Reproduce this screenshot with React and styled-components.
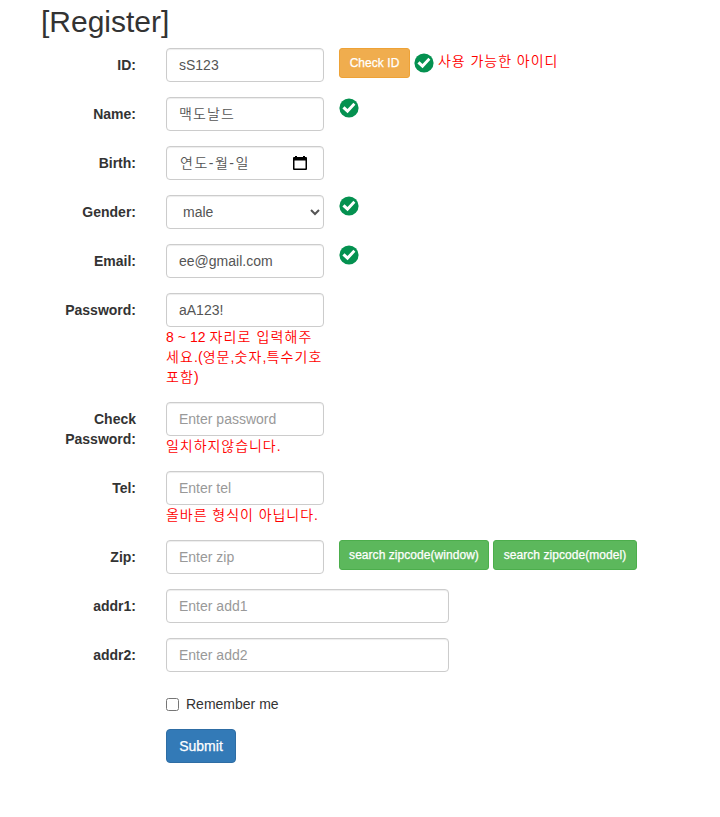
import React from "react";
import styled, { createGlobalStyle, css } from "styled-components";

const GlobalStyle = createGlobalStyle`
  *, *::before, *::after { box-sizing: border-box; }
  body {
    margin: 0;
    background: #fff;
    color: #333;
    font: 14px/20px "Liberation Sans", "Noto Sans CJK KR", sans-serif;
  }
`;

const Page = styled.main`
  width: 720px;
  height: 817px;
  padding: 5px 0 0 41px;
  overflow: hidden;
`;

const Title = styled.h2`
  margin: 0 0 10px;
  font-size: 30px;
  font-weight: 400;
  line-height: 33px;
`;

const Form = styled.form`
  display: flex;
  flex-direction: column;
  gap: 15px;
`;

const FormRow = styled.div`
  display: grid;
  grid-template-columns: 95px ${(p) => (p.$wide ? 298 : 173)}px auto;
  column-gap: 15px;
  justify-content: start;
  align-items: start;
`;

const Label = styled.label`
  padding-top: 7px;
  font-weight: 700;
  text-align: right;
`;

const Field = styled.div`
  display: flex;
  flex-direction: column;
  margin-left: 15px;
`;

const control = css`
  display: block;
  width: 100%;
  height: 34px;
  margin: 0;
  padding: 6px 12px;
  border: 1px solid #ccc;
  border-radius: 4px;
  background: #fff;
  box-shadow: inset 0 1px 1px rgba(0, 0, 0, 0.075);
  color: #555;
  font: inherit;
  font-weight: ${(p) => (p.$korean ? 350 : 400)};
  letter-spacing: ${(p) => (p.$korean ? "1.1px" : "normal")};
`;

const TextInput = styled.input`
  ${control}
  ${(p) => p.$korean && "padding-bottom: 8px;"}
  &::placeholder { color: #999; opacity: 1; }
`;

const Select = styled.select`
  ${control}
`;

const DateBox = styled.div`
  ${control}
  display: flex;
  align-items: center;
  justify-content: space-between;
  padding: 6px 16px 6px 13px;
  letter-spacing: 1.5px;
`;

const Message = styled.span`
  margin: ${(p) => p.$top || 0}px -10px 0 0;
  color: red;
  font-weight: 350;
  letter-spacing: ${(p) => p.$spacing || 0.95}px;
`;

const MessageLine = styled.span`
  display: block;
  letter-spacing: 1.1px;
`;

const Digits = styled.span`
  letter-spacing: 0.05px;
`;

const Aside = styled.div`
  display: flex;
  align-items: flex-start;
  gap: 4px;
`;

const StatusIcon = styled.svg`
  flex: none;
  width: 20px;
  height: 20px;
  margin-top: ${(p) => p.$top || 0}px;
`;

const tones = {
  warning: ["#f0ad4e", "#eea236"],
  success: ["#5cb85c", "#4cae4c"],
  primary: ["#337ab7", "#2e6da4"],
};

const Button = styled.button`
  width: ${(p) => p.$width}px;
  height: ${(p) => (p.$large ? 34 : 30)}px;
  padding: 0;
  border: 1px solid ${(p) => tones[p.$tone][1]};
  border-radius: ${(p) => (p.$large ? 4 : 3)}px;
  background: ${(p) => tones[p.$tone][0]};
  color: #fff;
  font-family: inherit;
  font-size: ${(p) => (p.$large ? 14 : 12)}px;
  font-weight: 400;
  line-height: 18px;
  letter-spacing: ${(p) => (p.$large ? 0 : 0.05)}px;
  white-space: nowrap;
  -webkit-text-stroke: 0.25px #fff;
`;

const Actions = styled.div`
  display: flex;
  flex-direction: column;
  align-items: flex-start;
  gap: 15px;
  margin: 7px 0 0 125px;
`;

const Remember = styled.label`
  display: flex;
  align-items: center;
  gap: 7px;
`;

const Checkbox = styled.input`
  width: 13px;
  height: 13px;
  margin: 1px 0 0;
`;

function Check({ top }) {
  return (
    <StatusIcon $top={top} viewBox="0 0 20 20" aria-label="valid">
      <circle cx="10" cy="10" r="9.6" fill="#049150" />
      <path d="M3.4 10.4 5.5 8.3l3 2.6 5.9-6.1 2 2-7.8 8.4z" fill="#fff" />
    </StatusIcon>
  );
}

function CalendarIcon() {
  return (
    <svg width="14" height="16" viewBox="0 0 14 16" aria-hidden="true">
      <path
        fill="#000"
        fillRule="evenodd"
        d="M2 1h2v1h6V1h2v1h1a1 1 0 0 1 1 1v11a1 1 0 0 1-1 1H1a1 1 0 0 1-1-1V3a1 1 0 0 1 1-1h1zM1.5 5.5v8h11v-8z"
      />
    </svg>
  );
}

function Row({ label, wide, message, aside, children }) {
  return (
    <FormRow $wide={wide}>
      <Label>{label}</Label>
      <Field>
        {children}
        {message && <Message>{message}</Message>}
      </Field>
      {aside && <Aside>{aside}</Aside>}
    </FormRow>
  );
}

export default function App() {
  return (
    <>
      <GlobalStyle />
      <Page>
        <Title>[Register]</Title>
        <Form>
          <Row
            label="ID:"
            aside={
              <>
                <Button type="button" $tone="warning" $width={71}>Check ID</Button>
                <Check top={5} />
                <Message $top={3}>사용 가능한 아이디</Message>
              </>
            }
          >
            <TextInput defaultValue="sS123" />
          </Row>
          <Row label="Name:" aside={<Check top={1} />}>
            <TextInput $korean defaultValue="맥도날드" />
          </Row>
          <Row label="Birth:">
            <DateBox $korean><span>연도-월-일</span><CalendarIcon /></DateBox>
          </Row>
          <Row label="Gender:" aside={<Check top={1} />}>
            <Select defaultValue="male">
              <option>male</option>
              <option>female</option>
            </Select>
          </Row>
          <Row label="Email:" aside={<Check top={1} />}>
            <TextInput defaultValue="ee@gmail.com" />
          </Row>
          <Row
            label="Password:"
            message={
              <>
                <MessageLine><Digits>8 ~ 12 </Digits>자리로 입력해주</MessageLine>
                <MessageLine>세요<Digits>.(</Digits>영문<Digits>,</Digits>숫자<Digits>,</Digits>특수기호</MessageLine>
                <MessageLine>포함<Digits>)</Digits></MessageLine>
              </>
            }
          >
            <TextInput defaultValue="aA123!" />
          </Row>
          <Row label="Check Password:" message="일치하지않습니다.">
            <TextInput placeholder="Enter password" />
          </Row>
          <Row label="Tel:" message="올바른 형식이 아닙니다.">
            <TextInput placeholder="Enter tel" />
          </Row>
          <Row
            label="Zip:"
            aside={
              <>
                <Button type="button" $tone="success" $width={150}>search zipcode(window)</Button>
                <Button type="button" $tone="success" $width={144}>search zipcode(model)</Button>
              </>
            }
          >
            <TextInput placeholder="Enter zip" />
          </Row>
          <Row label="addr1:" wide>
            <TextInput placeholder="Enter add1" />
          </Row>
          <Row label="addr2:" wide>
            <TextInput placeholder="Enter add2" />
          </Row>
          <Actions>
            <Remember><Checkbox type="checkbox" />Remember me</Remember>
            <Button type="button" $tone="primary" $width={70} $large>Submit</Button>
          </Actions>
        </Form>
      </Page>
    </>
  );
}
